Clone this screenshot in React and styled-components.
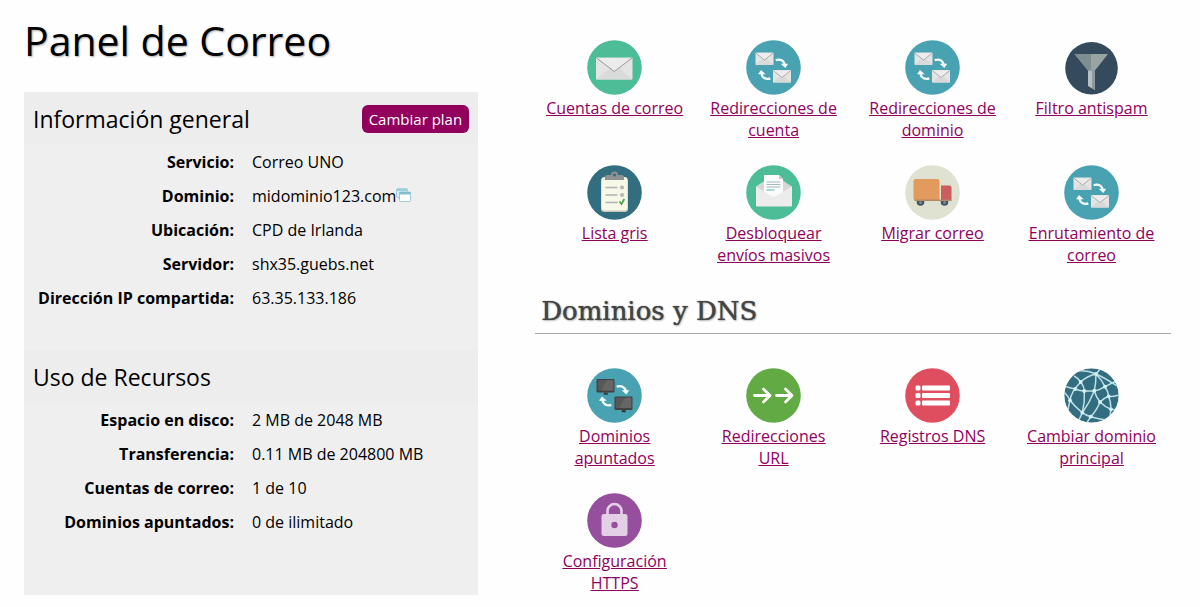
import styled, { createGlobalStyle } from "styled-components";

const GlobalStyle = createGlobalStyle`
	* {
		box-sizing: border-box;
	}

	body {
		margin: 0;
		background: #fefefe;
		color: #000;
		font-family: "Open Sans", "Noto Sans", sans-serif;
		font-size: 16px;
		line-height: 22px;
	}
`;

const infoRows = [
	{ label: "Servicio:", value: "Correo UNO" },
	{ label: "Dominio:", value: "midominio123.com", external: true },
	{ label: "Ubicación:", value: "CPD de Irlanda" },
	{ label: "Servidor:", value: "shx35.guebs.net" },
	{ label: "Dirección IP compartida:", value: "63.35.133.186" },
];

const usageRows = [
	{ label: "Espacio en disco:", value: "2 MB de 2048 MB" },
	{ label: "Transferencia:", value: "0.11 MB de 204800 MB" },
	{ label: "Cuentas de correo:", value: "1 de 10" },
	{ label: "Dominios apuntados:", value: "0 de ilimitado" },
];

const Disc = ({ fill }) => <circle cx="27.5" cy="27.5" r="27.3" fill={fill} />;

const SmallEnvelope = ({ x, y }) => (
	<g transform={`translate(${x} ${y})`}>
		<rect width="18" height="12.5" rx="0.8" fill="#e4e4e4" />
		<path d="M0 12.500 6.500 6.500h5L18 12.500z" fill="#d9d9d9" />
		<path d="M0.500 0.800 9 7.500l8.500-6.700" fill="#ececec" stroke="#a6a6a6" strokeWidth="0.9" />
	</g>
);

const SwapArrows = () => (
	<g fill="none" stroke="#f2fafa" strokeWidth="2.4">
		<path d="M29.700 20.200c4.500-1.500 8.300.2 9.200 4.500" />
		<path d="M34.600 23.800h7.600L39.400 28z" fill="#f2fafa" stroke="none" />
		<path d="M24.300 38.500c-4.800 1.300-8.300-.8-8.900-5.200" />
		<path d="M12 34.300 15 30l4.800 4.300z" fill="#f2fafa" stroke="none" />
	</g>
);

const Monitor = ({ x, y }) => (
	<g transform={`translate(${x} ${y})`}>
		<rect width="18" height="13.5" rx="1" fill="#424242" />
		<rect x="1.2" y="1.2" width="15.6" height="10.3" fill="#585858" />
		<path d="M10.500 1.200h6.300v10.300H5z" fill="#666" />
		<path d="M7.500 13.500h3.500l.5 2.200H7z" fill="#3a3a3a" />
	</g>
);

const MailIcon = () => (
	<Icon viewBox="0 0 55 55" aria-hidden="true">
		<Disc fill="#4cbd96" />
		<rect x="9" y="17.500" width="36.5" height="22" rx="1" fill="#e4e4e4" />
		<path d="M9 39.500 23 28h9l13.500 11.500z" fill="#dadada" />
		<path d="M9.500 18 27.300 31.500 45 18" fill="#ececec" stroke="#999" />
	</Icon>
);

const ForwardIcon = () => (
	<Icon viewBox="0 0 55 55" aria-hidden="true">
		<Disc fill="#49a2b2" />
		<SmallEnvelope x="9.5" y="12.5" />
		<SmallEnvelope x="27" y="30" />
		<SwapArrows />
	</Icon>
);

const FilterIcon = () => (
	<Icon viewBox="0 0 55 55" aria-hidden="true">
		<circle cx="27.5" cy="28.2" r="26.3" fill="#354b5d" />
		<path d="M10.500 14H44L31 30.500H24z" fill="#98a3a3" />
		<path d="M10.500 14H27v16.500h-3z" fill="#7f8e90" />
		<path d="M24 30.500h7V50l-7-4z" fill="#b8bfc2" />
		<path d="M28 30.500h3V50l-3-1.700z" fill="#8d999d" />
	</Icon>
);

const ChecklistIcon = () => (
	<Icon viewBox="0 0 55 55" aria-hidden="true">
		<Disc fill="#336e80" />
		<rect x="14" y="13" width="27" height="34" rx="3" fill="#c9c9ba" />
		<rect x="14.5" y="12" width="26" height="33.5" rx="3" fill="#f7f8e8" />
		<path d="M18 15v-2.500a2.500 2.500 0 0 1 2.500-2.500H24a3.500 3.500 0 0 1 7 0h3.500a2.500 2.500 0 0 1 2.500 2.500V15z" fill="#8e9293" />
		<circle cx="27.5" cy="10" r="1.6" fill="#336e80" />
		<path d="M18.500 22.500h12M18.500 30h12M18.500 37.500h12" stroke="#b0b1b0" strokeWidth="1.5" />
		<circle cx="35" cy="22.5" r="2" fill="#b4b6b3" />
		<circle cx="35" cy="30" r="2" fill="#b4b6b3" />
		<path d="M32.500 36.500l2 2.500 2.800-5" fill="none" stroke="#4ba44f" strokeWidth="1.8" />
	</Icon>
);

const OpenMailIcon = () => (
	<Icon viewBox="0 0 55 55" aria-hidden="true">
		<Disc fill="#4cbd96" />
		<path d="M10 21.500 20 15h16l10 6.500v18H10z" fill="#d6d6d6" />
		<path d="M18 10h15l4 4v18H18z" fill="#fbfbfb" />
		<path d="M33 10v4h4z" fill="#c9c9c9" />
		<path d="M20.500 17h14M20.500 19.500h14M20.500 22h14" stroke="#a5b6bd" />
		<path d="M20.500 25h8" stroke="#53b6b0" />
		<path d="M10 21.500 27.500 32.500 46 21.500v19a1 1 0 0 1-1 1H11a1 1 0 0 1-1-1z" fill="#ececec" />
	</Icon>
);

const TruckIcon = () => (
	<Icon viewBox="0 0 55 55" aria-hidden="true">
		<Disc fill="#dfe1d1" />
		<circle cx="15.5" cy="37" r="3.8" fill="#455565" />
		<circle cx="39.5" cy="37" r="3.8" fill="#455565" />
		<circle cx="15.5" cy="37.5" r="1.4" fill="#7c8993" />
		<circle cx="39.5" cy="37.5" r="1.4" fill="#7c8993" />
		<rect x="8.5" y="14" width="26" height="21.5" rx="2" fill="#e29a5e" />
		<path d="M36 20.500h8.500a2 2 0 0 1 2 2v13H36z" fill="#cb5d5e" />
		<path d="M9.500 34.500h37v1.500h-37z" fill="#b28a66" />
	</Icon>
);

const PointedIcon = () => (
	<Icon viewBox="0 0 55 55" aria-hidden="true">
		<Disc fill="#49a2b2" />
		<Monitor x="9.5" y="11" />
		<Monitor x="27.5" y="28.5" />
		<g transform="translate(0 -1.500)">
			<SwapArrows />
		</g>
	</Icon>
);

const RedirectIcon = () => (
	<Icon viewBox="0 0 55 55" aria-hidden="true">
		<Disc fill="#62aa43" />
		<g fill="none" stroke="#fff" strokeWidth="2.8" strokeLinecap="round" strokeLinejoin="round">
			<path d="M8.500 27.500h15M17.500 21l6.500 6.500-6.500 6.500" />
			<path d="M30.500 27.500h15M39.500 21l6.500 6.500-6.500 6.500" />
		</g>
	</Icon>
);

const ListIcon = () => (
	<Icon viewBox="0 0 55 55" aria-hidden="true">
		<Disc fill="#df4e5e" />
		<g fill="#fff">
			<rect x="10.5" y="17.5" width="5" height="5" rx="1.5" />
			<rect x="10.5" y="25" width="5" height="5" rx="1.5" />
			<rect x="10.5" y="32.5" width="5" height="5" rx="1.5" />
			<rect x="17" y="17.5" width="28" height="5" rx="1" />
			<rect x="17" y="25" width="28" height="5" rx="1" />
			<rect x="17" y="32.5" width="28" height="5" rx="1" />
		</g>
	</Icon>
);

const globeNodes = [
	[32, 6],
	[16.7, 14],
	[11.3, 21],
	[20.3, 23],
	[30.3, 22.7],
	[41, 18.7],
	[44.7, 28.3],
	[36, 34],
	[6, 32.3],
	[47, 41.3],
	[18.3, 44.7],
	[26.7, 48.7],
];

const GlobeIcon = () => (
	<Icon viewBox="0 0 55 55" aria-hidden="true">
		<clipPath id="globe">
			<circle cx="27.5" cy="27.5" r="27.3" />
		</clipPath>
		<g clipPath="url(#globe)">
			<Disc fill="#336e80" />
			<g fill="none" stroke="#bde0e7" strokeWidth="1.5">
				<path d="M14 3Q23 2 32 6T53 18" />
				<path d="M32 6Q23 8 16.700 14 7 24 6 32.300 4 39 4 45" />
				<path d="M10 8Q14 10 16.700 14 20 18 20.300 23 21 34 18.300 44.700L14 54" />
				<path d="M0 18Q6 20 11.300 21 16 23 20.300 23h10Q36 22 41 18.700L52 13" />
				<path d="M32 6Q32 15 30.300 22.700 26 34 18.300 44.700" />
				<path d="M32 6Q38 12 41 18.700 44 23 44.700 28.300 47 34 47 41.300L46 48" />
				<path d="M30.300 22.700Q32 29 36 34 41 39 47 41.300L53 42" />
				<path d="M36 34Q33 42 26.700 48.700L22 56" />
				<path d="M55 27Q50 29 44.700 28.300 40 30 36 34" />
				<path d="M0 24Q4 28 6 32.300 11 39 18.300 44.700 22 47.500 26.700 48.700 35 51 42 52" />
				<path d="M32 6 37 0" />
			</g>
			<g fill="#d6f1f4">
				{globeNodes.map(([cx, cy]) => (
					<circle key={`${cx}-${cy}`} cx={cx} cy={cy} r="1.9" />
				))}
			</g>
		</g>
	</Icon>
);

const LockIcon = () => (
	<Icon viewBox="0 0 55 55" aria-hidden="true">
		<Disc fill="#954f9d" />
		<path d="M20.500 22v-4a7 7 0 0 1 14 0v4" fill="none" stroke="#e3d0e6" strokeWidth="2.6" />
		<rect x="14.5" y="21" width="26" height="22" rx="2.5" fill="#e3d0e6" />
		<circle cx="27.5" cy="32" r="3.2" fill="#954f9d" />
	</Icon>
);

const mailTools = [
	{ name: "Cuentas de correo", icon: MailIcon, oneLine: true },
	{ name: "Redirecciones de cuenta", icon: ForwardIcon },
	{ name: "Redirecciones de dominio", icon: ForwardIcon },
	{ name: "Filtro antispam", icon: FilterIcon },
	{ name: "Lista gris", icon: ChecklistIcon },
	{ name: "Desbloquear envíos masivos", icon: OpenMailIcon },
	{ name: "Migrar correo", icon: TruckIcon },
	{ name: "Enrutamiento de correo", icon: ForwardIcon },
];

const domainTools = [
	{ name: "Dominios apuntados", icon: PointedIcon },
	{ name: "Redirecciones URL", icon: RedirectIcon },
	{ name: "Registros DNS", icon: ListIcon },
	{ name: "Cambiar dominio principal", icon: GlobeIcon },
	{ name: "Configuración HTTPS", icon: LockIcon },
];

const WindowsIcon = () => (
	<SmallIcon viewBox="0 0 15 14" aria-hidden="true">
		<rect x="0.5" y="0.5" width="11" height="9" rx="1" fill="#d5edf3" stroke="#a6d0dc" />
		<path d="M1 1h10v2H1z" fill="#a0cfdc" />
		<rect x="3.5" y="4" width="11" height="9.5" rx="1" fill="#fff" stroke="#9ccbd9" />
		<path d="M3.500 4h11v2.500h-11z" fill="#84bccd" />
	</SmallIcon>
);

const Details = ({ rows }) => (
	<DetailsTable>
		<tbody>
			{rows.map((row) => (
				<tr key={row.label}>
					<DetailLabel scope="row">{row.label}</DetailLabel>
					<DetailValue>
						{row.value}
						{row.external && (
							<ExternalLink href="#" aria-label={row.value}>
								<WindowsIcon />
							</ExternalLink>
						)}
					</DetailValue>
				</tr>
			))}
		</tbody>
	</DetailsTable>
);

const Tools = ({ items }) => (
	<ToolGrid>
		{items.map(({ name, icon: ToolIcon, oneLine }) => (
			<Tool key={name} href="#">
				<ToolIcon />
				<ToolName $oneLine={oneLine}>{name}</ToolName>
			</Tool>
		))}
	</ToolGrid>
);

const App = () => {
	return (
		<>
			<GlobalStyle />
			<Page>
				<Sidebar>
					<Title>Panel de Correo</Title>
					<Panel>
						<PanelHeader>
							<PanelTitle>Información general</PanelTitle>
							<PlanButton type="button">Cambiar plan</PlanButton>
						</PanelHeader>
						<Details rows={infoRows} />
						<PanelHeader>
							<PanelTitle>Uso de Recursos</PanelTitle>
						</PanelHeader>
						<Details rows={usageRows} />
					</Panel>
				</Sidebar>
				<Content>
					<Tools items={mailTools} />
					<SectionTitle>Dominios y DNS</SectionTitle>
					<Tools items={domainTools} />
				</Content>
			</Page>
		</>
	);
};

export default App;

const Page = styled.div`
	display: grid;
	grid-template-columns: 5fr 7fr;
	gap: 57px;
	align-items: start;
	padding: 0 29px 12px 24px;
`;

const Sidebar = styled.aside`
	padding-top: 12px;
`;

const Title = styled.h1`
	margin: 0 0 24px;
	font-size: 41px;
	font-weight: 400;
	line-height: 56px;
	text-shadow: 1px 1px 2px #aaa;
`;

const Panel = styled.section`
	background: #efefef;
`;

const PanelHeader = styled.div`
	display: flex;
	align-items: center;
	justify-content: space-between;
	height: 53px;
	padding: 0 9px;
	background: #ededed;
`;

const PanelTitle = styled.h2`
	margin: 0;
	font-size: 23px;
	font-weight: 400;
	line-height: 32px;
`;

const PlanButton = styled.button`
	height: 28px;
	padding: 0 7px;
	border: 0;
	border-radius: 6px;
	background: #91005d;
	color: #fff;
	font-family: inherit;
	font-size: 15px;
	line-height: 22px;
	cursor: pointer;
`;

const DetailsTable = styled.table`
	width: 100%;
	border-collapse: collapse;
	table-layout: fixed;
	margin-bottom: 35px;

	&:last-child {
		margin-bottom: 0;
		border-bottom: 56px solid transparent;
	}
`;

const DetailLabel = styled.th`
	width: 219px;
	padding: 6px 9px;
	font-weight: 700;
	text-align: right;
	white-space: nowrap;
`;

const DetailValue = styled.td`
	padding: 6px 9px;
`;

const ExternalLink = styled.a`
	display: inline-block;
`;

const SmallIcon = styled.svg`
	display: block;
	width: 15px;
	height: 14px;
`;

const Content = styled.main`
	padding-top: 40px;
`;

const ToolGrid = styled.nav`
	display: grid;
	grid-template-columns: repeat(4, minmax(0, 1fr));
	row-gap: 24px;
`;

const Tool = styled.a`
	display: flex;
	flex-direction: column;
	align-items: center;
	gap: 2px;
	padding: 0 12px;
	color: #91005d;
	text-align: center;
`;

const ToolName = styled.span`
	text-decoration: underline;
	white-space: ${(props) => (props.$oneLine ? "nowrap" : "normal")};
`;

const Icon = styled.svg`
	display: block;
	width: 55px;
	height: 55px;
`;

const SectionTitle = styled.h2`
	margin: 25px 0 34px;
	padding: 0 6px 2px;
	border-bottom: 1px solid #aaa;
	color: #444;
	font-family: "DejaVu Serif", serif;
	font-size: 26px;
	font-weight: 400;
	line-height: 40px;
	text-shadow: 0 0 1px #444, 1px 1px 2px #bbb;
`;
